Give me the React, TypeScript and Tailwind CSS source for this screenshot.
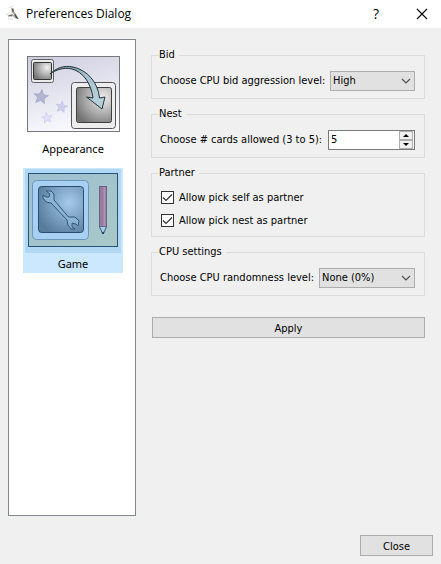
import { useState } from "react";
import type { ReactNode } from "react";

function BirdIcon() {
  return (
    <svg width="16" height="18" viewBox="0 0 16 18" aria-hidden="true">
      <path d="M5 2.500 L9 1.500 M2 9 L6 10.500 M4 13.500 L9 15" stroke="#dedede" strokeWidth="1.200" fill="none" />
      <path d="M7 3 L9.500 3 L10 6 L12 9 L15 14 L11.500 13.500 L8.500 11 L4 12 L4 10.500 L8 9 Z" fill="#b4b1aa" />
      <path d="M8 3.500 L9.500 4.500 L9.500 7.500 L8.500 6.500 Z M11 8.500 L12.500 11 L14.500 14 L12 13 L10.500 10 Z" fill="#4a4743" />
      <path d="M4 10.500 L8 9.500 L8 11.500 Z" fill="#6d6a65" />
      <path d="M8 8 L10 10" stroke="#eeeae2" strokeWidth="1" />
    </svg>
  );
}

function Star({ x, y, size, turn, fill, stroke }: { x: number; y: number; size: number; turn: number; fill: string; stroke: string }) {
  return (
    <path
      d="M0 -10 L2.700 -3.500 L9.500 -3.100 L4.300 1.400 L5.900 8.100 L0 4.500 L-5.900 8.100 L-4.300 1.400 L-9.500 -3.100 L-2.700 -3.500 Z"
      transform={`translate(${x} ${y}) rotate(${turn}) scale(${size})`}
      fill={fill}
      stroke={stroke}
      strokeWidth="1"
    />
  );
}

function AppearanceIcon() {
  return (
    <svg width="96" height="84" viewBox="0 0 96 84" aria-hidden="true">
      <defs>
        <linearGradient id="ap-bg" x1="0" y1="0" x2="0.300" y2="1">
          <stop offset="0" stopColor="#cdcde0" />
          <stop offset="1" stopColor="#f8f8fd" />
        </linearGradient>
        <radialGradient id="ap-screen" cx="0.750" cy="0.300" r="0.850">
          <stop offset="0" stopColor="#f0f0f0" />
          <stop offset="1" stopColor="#747474" />
        </radialGradient>
        <linearGradient id="ap-arrow" x1="0" y1="0" x2="1" y2="0.500">
          <stop offset="0" stopColor="#6c8790" />
          <stop offset="0.600" stopColor="#a5c0ca" />
          <stop offset="1" stopColor="#b5d0d9" />
        </linearGradient>
      </defs>
      <rect x="2.500" y="2.500" width="92" height="75" fill="url(#ap-bg)" stroke="#77777c" />
      <rect x="6.500" y="5.500" width="22" height="23" rx="2" fill="#ebebeb" stroke="#606060" />
      <rect x="8.500" y="8.500" width="18" height="17" rx="1" fill="url(#ap-screen)" stroke="#333333" />
      <Star x={16} y={43} size={0.75} turn={8} fill="#b4b5d0" stroke="#a3a5c8" />
      <Star x={36.5} y={53} size={0.6} turn={10} fill="#ceceeb" stroke="#babce4" />
      <Star x={22} y={64} size={0.56} turn={-8} fill="#e0e0fa" stroke="#c5c7f0" />
      <rect x="46.500" y="28.500" width="44" height="46" rx="3" fill="#ededed" stroke="#555555" />
      <rect x="51.500" y="33.500" width="35" height="35" rx="2" fill="url(#ap-screen)" stroke="#404040" />
      <path
        d="M25 20 C31 14 39 11 48 13 C62 16 73 28 74.500 44 L80 43 L77 55 L61.500 43 L68 44 C66 29 58 18 47 15 C38 13 31 16 25 20 Z"
        fill="url(#ap-arrow)"
        stroke="#26343a"
        strokeWidth="1"
      />
    </svg>
  );
}

function GameIcon() {
  return (
    <svg width="96" height="84" viewBox="0 0 96 84" aria-hidden="true">
      <defs>
        <linearGradient id="gm-bg" x1="0" y1="0" x2="1" y2="1">
          <stop offset="0" stopColor="#9ebfd0" />
          <stop offset="1" stopColor="#a8c8c8" />
        </linearGradient>
        <radialGradient id="gm-screen" cx="0.680" cy="0.350" r="0.750">
          <stop offset="0" stopColor="#a5caec" />
          <stop offset="1" stopColor="#577c9c" />
        </radialGradient>
      </defs>
      <rect x="3.500" y="4.500" width="89" height="73" fill="url(#gm-bg)" stroke="#255275" />
      <rect x="7.500" y="11.500" width="56" height="59" rx="4" fill="#a8d0f2" stroke="#6c96b8" />
      <rect x="13.500" y="17.500" width="45" height="46" rx="3" fill="url(#gm-screen)" stroke="#294d6d" />
      <path
        d="M21 22 L26 22 L29 25 L29 31 L43.500 48 L50 48 L54 52 L53 57 L51 55 L47 54 L47 58 L50 60 L46 60 L43 56 L42 51 L26 34 L21 33 L18 29 L18 26 L21 28 L24 28 L25 25 Z"
        fill="#8db3d4"
        stroke="#2e587b"
        strokeWidth="1"
        strokeLinejoin="round"
      />
      <path d="M74.500 17.500 H81.500 V58 L78 65 L74.500 58 Z" fill="#a8cce5" stroke="#315976" />
      <rect x="74.500" y="17.500" width="7" height="40" fill="#987c9f" stroke="#6b6289" />
      <path d="M79.500 18 V57" stroke="#aa93b1" strokeWidth="2" />
      <path d="M77 63 L78 65 L79 63" stroke="#183f61" fill="none" />
    </svg>
  );
}

function Group({ title, children }: { title: string; children: ReactNode }) {
  return (
    <fieldset className="min-w-0 border border-[#dcdcdc] pt-2 pr-[9px] pb-[7px] pl-2">
      <legend className="-ml-px pr-1 leading-4">{title}</legend>
      {children}
    </fieldset>
  );
}

function Dropdown({ id, options, width }: { id: string; options: string[]; width: string }) {
  return (
    <div className={`relative shrink-0 ${width}`}>
      <select id={id} className="block h-5 w-full appearance-none border border-[#adadad] bg-[#e1e1e1] pr-5 pl-[2px] leading-[18px]">
        {options.map((option) => (
          <option key={option}>{option}</option>
        ))}
      </select>
      <svg className="pointer-events-none absolute top-[7px] right-1" width="10" height="6" viewBox="0 0 10 6" aria-hidden="true">
        <path d="M1 1 L5 5 L9 1" fill="none" stroke="#505050" strokeWidth="1.200" />
      </svg>
    </div>
  );
}

function Check({ label }: { label: string }) {
  return (
    <label className="flex h-[23px] items-center gap-[5px] pl-px">
      <span className="grid size-[13px] place-items-center">
        <input type="checkbox" defaultChecked className="peer col-start-1 row-start-1 size-[13px] appearance-none border border-[#333333] bg-white" />
        <svg className="pointer-events-none invisible col-start-1 row-start-1 peer-checked:visible" width="11" height="11" viewBox="0 0 11 11" aria-hidden="true">
          <path d="M1 5.500 L4 8.500 L10 2.500" fill="none" stroke="#333333" strokeWidth="1.200" />
        </svg>
      </span>
      <span className="pt-px">{label}</span>
    </label>
  );
}

const stepButton = "grid h-[9px] place-items-center border border-[#adadad] bg-[#f0f0f0]";
const pushButton = "h-[21px] border border-[#adadad] bg-[#e1e1e1] pt-0.5 leading-4";

export default function App() {
  const [cards, setCards] = useState(5);
  const [page, setPage] = useState("Game");
  const pages = [
    { name: "Appearance", icon: <AppearanceIcon /> },
    { name: "Game", icon: <GameIcon /> },
  ];

  return (
    <div className="flex min-h-screen flex-col bg-[#f0f0f0] font-['DejaVu_Sans_Condensed','DejaVu_Sans',sans-serif] text-[11px] text-black">
      <header className="flex h-7 items-center bg-white pr-[13px] pl-1 font-['Open_Sans',sans-serif] text-[12px]">
        <BirdIcon />
        <h1 className="ml-1.5 flex-1 leading-4">Preferences Dialog</h1>
        <button type="button" aria-label="Help" className="mr-8 w-4 text-center text-[14px] leading-5">
          ?
        </button>
        <button type="button" aria-label="Close window">
          <svg width="12" height="12" viewBox="0 0 12 12" aria-hidden="true">
            <path d="M1 1 L11 11 M11 1 L1 11" stroke="#000000" strokeWidth="1.100" />
          </svg>
        </button>
      </header>

      <main className="flex flex-1 gap-[15px] pt-[11px] pr-4 pl-2">
        <nav className="flex w-32 shrink-0 flex-col items-center gap-2.5 border border-[#828790] bg-white pt-[13px] pl-0.5 font-['Noto_Sans',sans-serif]">
          {pages.map(({ name, icon }) => (
            <button
              key={name}
              type="button"
              aria-pressed={page === name}
              onClick={() => setPage(name)}
              className="group flex w-[100px] flex-col items-center aria-pressed:bg-[#cce8ff]"
            >
              <span className="mt-px group-aria-pressed:bg-[#b2d7f5]">{icon}</span>
              <span className="pt-0.5 leading-[18px]">{name}</span>
            </button>
          ))}
        </nav>

        <form className="flex flex-1 flex-col gap-[7px] pt-2" onSubmit={(event) => event.preventDefault()}>
          <Group title="Bid">
            <div className="flex h-5 items-center justify-between">
              <label htmlFor="aggression">Choose CPU bid aggression level:</label>
              <Dropdown id="aggression" options={["High", "Medium", "Low"]} width="w-[85px]" />
            </div>
          </Group>

          <Group title="Nest">
            <div className="flex h-5 items-center justify-between">
              <label htmlFor="cards">Choose # cards allowed (3 to 5):</label>
              <div className="flex h-5 w-[87px] border border-[#7a7a7a] bg-white">
                <input
                  id="cards"
                  type="number"
                  min={3}
                  max={5}
                  value={cards}
                  onChange={(event) => setCards(Number(event.target.value))}
                  className="w-0 min-w-0 flex-1 pl-[2px] [appearance:textfield] [&::-webkit-inner-spin-button]:appearance-none"
                />
                <div className="mr-px flex w-[14px] flex-col">
                  <button type="button" aria-label="More cards" onClick={() => setCards(Math.min(5, cards + 1))} className={stepButton}>
                    <svg width="6" height="3" viewBox="0 0 6 3" aria-hidden="true"><path d="M0 3 L3 0 L6 3 Z" /></svg>
                  </button>
                  <button type="button" aria-label="Fewer cards" onClick={() => setCards(Math.max(3, cards - 1))} className={stepButton}>
                    <svg width="6" height="3" viewBox="0 0 6 3" aria-hidden="true"><path d="M0 0 L3 3 L6 0 Z" /></svg>
                  </button>
                </div>
              </div>
            </div>
          </Group>

          <Group title="Partner">
            <div className="-my-[3px]">
              <Check label="Allow pick self as partner" />
              <Check label="Allow pick nest as partner" />
            </div>
          </Group>

          <Group title="CPU settings">
            <div className="flex h-5 items-center justify-between">
              <label htmlFor="randomness">Choose CPU randomness level:</label>
              <Dropdown id="randomness" options={["None (0%)", "Low (25%)", "High (75%)"]} width="w-24" />
            </div>
          </Group>

          <button type="submit" className={`mt-3.5 ml-px ${pushButton}`}>
            Apply
          </button>
        </form>
      </main>

      <footer className="flex justify-end px-2 pt-[19px] pb-2">
        <button type="button" className={`w-[73px] ${pushButton}`}>
          Close
        </button>
      </footer>
    </div>
  );
}
